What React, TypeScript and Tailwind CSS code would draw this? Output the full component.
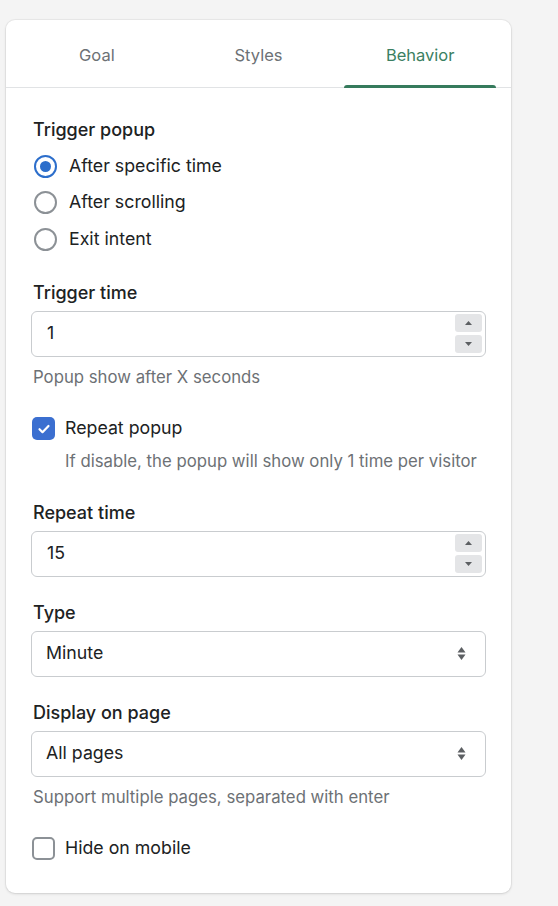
import { ReactNode } from 'react'

const font = { fontFamily: 'Inter, "Noto Sans", "Liberation Sans", sans-serif' }

const tabs = ['Goal', 'Styles', 'Behavior']

function Label({ children, className = '' }: { children: ReactNode; className?: string }) {
  return <div className={`text-[18px] leading-6 font-medium text-[#202223] ${className}`}>{children}</div>
}

function Help({ children, className = '' }: { children: ReactNode; className?: string }) {
  return <div className={`text-[16.75px] leading-6 text-[#6d7175] ${className}`}>{children}</div>
}

function Radio({ label, checked }: { label: string; checked?: boolean }) {
  return (
    <div className="flex h-[36.5px] items-center gap-3">
      <span
        className={`flex h-[23px] w-[23px] items-center justify-center rounded-full border-2 bg-white ${
          checked ? 'border-[#2c6ecb]' : 'border-[#8c9196]'
        }`}
      >
        {checked && <span className="h-[11px] w-[11px] rounded-full bg-[#2c6ecb]" />}
      </span>
      <span className="text-[17.75px] text-[#202223]">{label}</span>
    </div>
  )
}

function Checkbox({ label, checked }: { label: string; checked?: boolean }) {
  return (
    <div className="flex h-6 items-center gap-[10px]">
      {checked ? (
        <span className="flex h-[23px] w-[23px] items-center justify-center rounded-[5px] bg-[#3b6fd0]">
          <svg width="14" height="14" viewBox="0 0 14 14" fill="none">
            <path d="M2.5 7.2l3 3 6-6.2" stroke="white" strokeWidth="2.2" strokeLinecap="round" strokeLinejoin="round" />
          </svg>
        </span>
      ) : (
        <span className="h-[23px] w-[23px] rounded-[5px] border-2 border-[#8c9196] bg-white" />
      )}
      <span className="text-[17.75px] text-[#202223]">{label}</span>
    </div>
  )
}

function NumberField({ value }: { value: string }) {
  return (
    <div className="flex h-[46px] items-center rounded-[6px] border border-[#c9cccf] bg-white pl-[15px] pr-[3px]">
      <span className="flex-1 text-[17.75px] text-[#202223]">{value}</span>
      <div className="flex flex-col gap-[3px]">
        <span className="flex h-[18px] w-[27px] items-center justify-center rounded-[3px] bg-[#e4e5e7]">
          <svg width="7" height="4" viewBox="0 0 7 4">
            <path d="M3.5 0L7 4H0z" fill="#5c5f62" />
          </svg>
        </span>
        <span className="flex h-[18px] w-[27px] items-center justify-center rounded-[3px] bg-[#e4e5e7]">
          <svg width="7" height="4" viewBox="0 0 7 4">
            <path d="M0 0h7L3.5 4z" fill="#5c5f62" />
          </svg>
        </span>
      </div>
    </div>
  )
}

function SelectField({ value }: { value: string }) {
  return (
    <div className="flex h-[46px] items-center rounded-[6px] border border-[#c9cccf] bg-white pl-[14px] pr-[19px]">
      <span className="flex-1 text-[17.75px] text-[#202223]">{value}</span>
      <svg width="9" height="15" viewBox="0 0 9 15">
        <path d="M4.5 1L8.5 6.5H0.5z" fill="#5c5f62" />
        <path d="M0.5 8.5h8L4.5 14z" fill="#5c5f62" />
      </svg>
    </div>
  )
}

export default function App() {
  return (
    <div className="min-h-screen bg-[#f4f4f4] pt-5 pl-[6px]" style={font}>
      <div className="w-[505px] rounded-[9px] bg-white shadow-[0_0_0_1px_rgba(0,0,0,0.04),0_1px_3px_rgba(0,0,0,0.12)]">
        <div className="flex h-[68px] border-b border-[#e1e3e5] px-[10px] pt-[4px]">
          {tabs.map((tab) => {
            const active = tab === 'Behavior'
            return (
              <div key={tab} className="relative flex flex-1 items-center justify-center">
                <span className={`text-[16.5px] ${active ? 'text-[#3b7f62]' : 'text-[#6d7175]'}`}>{tab}</span>
                {active && (
                  <span className="absolute bottom-[-1px] left-[5px] right-[5px] h-[3px] rounded-t-[3px] bg-[#357a5c]" />
                )}
              </div>
            )
          })}
        </div>

        <div className="px-[25px] pt-[30px] pb-8">
          <Label className="pl-[2px]">Trigger popup</Label>
          <div className="mt-[6px] pl-[3px]">
            <Radio label="After specific time" checked />
            <Radio label="After scrolling" />
            <Radio label="Exit intent" />
          </div>

          <Label className="mt-[23px] pl-[2px]">Trigger time</Label>
          <div className="mt-[6px]">
            <NumberField value="1" />
          </div>
          <Help className="mt-2 pl-[2px]">Popup show after X seconds</Help>

          <div className="mt-7 pl-[1px]">
            <Checkbox label="Repeat popup" checked />
          </div>
          <Help className="mt-2 pl-[34px]">If disable, the popup will show only 1 time per visitor</Help>

          <Label className="mt-7 pl-[2px]">Repeat time</Label>
          <div className="mt-[6px]">
            <NumberField value="15" />
          </div>

          <Label className="mt-6 pl-[2px]">Type</Label>
          <div className="mt-[6px]">
            <SelectField value="Minute" />
          </div>

          <Label className="mt-6 pl-[2px]">Display on page</Label>
          <div className="mt-[6px]">
            <SelectField value="All pages" />
          </div>
          <Help className="mt-2 pl-[2px]">Support multiple pages, separated with enter</Help>

          <div className="mt-7 pl-[1px]">
            <Checkbox label="Hide on mobile" />
          </div>
        </div>
      </div>
    </div>
  )
}
